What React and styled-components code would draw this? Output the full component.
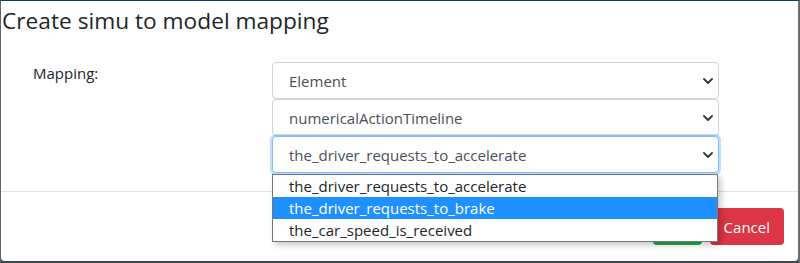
import React from 'react';
import styled, { createGlobalStyle } from 'styled-components';

const GlobalStyle = createGlobalStyle`
  html, body {
    margin: 0;
    padding: 0;
    background: #4e5b63;
    font-family: "Open Sans", "Noto Sans", Arial, sans-serif;
  }
`;

const Backdrop = styled.div`
  width: 800px;
  height: 263px;
  box-sizing: border-box;
  border-top: 1px solid #0d3b6e;
  border-left: 1px solid #5b6770;
  border-right: 2px solid #6e6e6e;
  border-bottom: 2px solid #3e4b52;
  background: #4e5b63;
`;

const Modal = styled.div`
  height: 100%;
  background: #fff;
  border-radius: 0 0 4px 4px;
  display: flex;
  flex-direction: column;
`;

const Header = styled.div`
  padding: 3px 1px 0;
`;

const Title = styled.h5`
  margin: 0;
  font-size: 22.7px;
  line-height: 33px;
  font-weight: 400;
  color: #212529;
`;

const Body = styled.div`
  flex: 1;
  padding: 25px 0 0 32px;
  display: grid;
  grid-template-columns: 239px 447px;
  align-items: start;
`;

const Label = styled.label`
  font-size: 15px;
  line-height: 23px;
  color: #212529;
`;

const SelectStack = styled.div`
  display: flex;
  flex-direction: column;
`;

const SelectWrap = styled.div`
  position: relative;
`;

const Select = styled.div`
  height: 37px;
  box-sizing: border-box;
  display: flex;
  align-items: center;
  justify-content: space-between;
  padding: 0 5px 0 16px;
  font-size: 15px;
  line-height: 24px;
  color: #495057;
  background: #fff;
  border: 1px solid ${(p) => (p.$focused ? '#80bdff' : '#ced4da')};
  border-radius: 4px;
  box-shadow: ${(p) => (p.$focused ? '0 0 0 2px rgba(0, 123, 255, 0.25)' : 'none')};
`;

const Chevron = () => (
  <svg width="10" height="6" viewBox="0 0 10 6">
    <path d="M1 1l4 4 4-4" fill="none" stroke="#343a40" strokeWidth="1.8" strokeLinecap="round" strokeLinejoin="round" />
  </svg>
);

const Dropdown = styled.ul`
  position: absolute;
  top: 100%;
  left: 0;
  width: 446px;
  margin: 1px 0 0;
  padding: 0;
  list-style: none;
  box-sizing: border-box;
  background: #fff;
  border: 1px solid #767676;
  box-shadow: 3px 3px 6px rgba(0, 0, 0, 0.22);
  z-index: 10;
`;

const Option = styled.li`
  height: 22px;
  line-height: 22px;
  padding-left: 16px;
  font-size: 15px;
  color: ${(p) => (p.$active ? '#fff' : '#212529')};
  background: ${(p) => (p.$active ? '#1e90ff' : 'transparent')};
`;

const Footer = styled.div`
  border-top: 1px solid #dee2e6;
  padding: 16px 14px 16px;
  display: flex;
  justify-content: flex-end;
  gap: 8px;
`;

const Button = styled.button`
  height: 37px;
  padding: 0 14px;
  border: none;
  border-radius: 4px;
  font-family: inherit;
  font-size: 15px;
  color: #fff;
  background: ${(p) => (p.$variant === 'danger' ? '#dc3545' : '#28a745')};
`;

const options = [
  'the_driver_requests_to_accelerate',
  'the_driver_requests_to_brake',
  'the_car_speed_is_received',
];

const App = () => {
  return (
    <>
      <GlobalStyle />
      <Backdrop>
        <Modal>
          <Header>
            <Title>Create simu to model mapping</Title>
          </Header>
          <Body>
            <Label>Mapping:</Label>
            <SelectStack>
              <Select>
                Element
                <Chevron />
              </Select>
              <Select>
                numericalActionTimeline
                <Chevron />
              </Select>
              <SelectWrap>
                <Select $focused>
                  the_driver_requests_to_accelerate
                  <Chevron />
                </Select>
                <Dropdown>
                  {options.map((o, i) => (
                    <Option key={o} $active={i === 1}>
                      {o}
                    </Option>
                  ))}
                </Dropdown>
              </SelectWrap>
            </SelectStack>
          </Body>
          <Footer>
            <Button>OK</Button>
            <Button $variant="danger">Cancel</Button>
          </Footer>
        </Modal>
      </Backdrop>
    </>
  );
};

export default App;
